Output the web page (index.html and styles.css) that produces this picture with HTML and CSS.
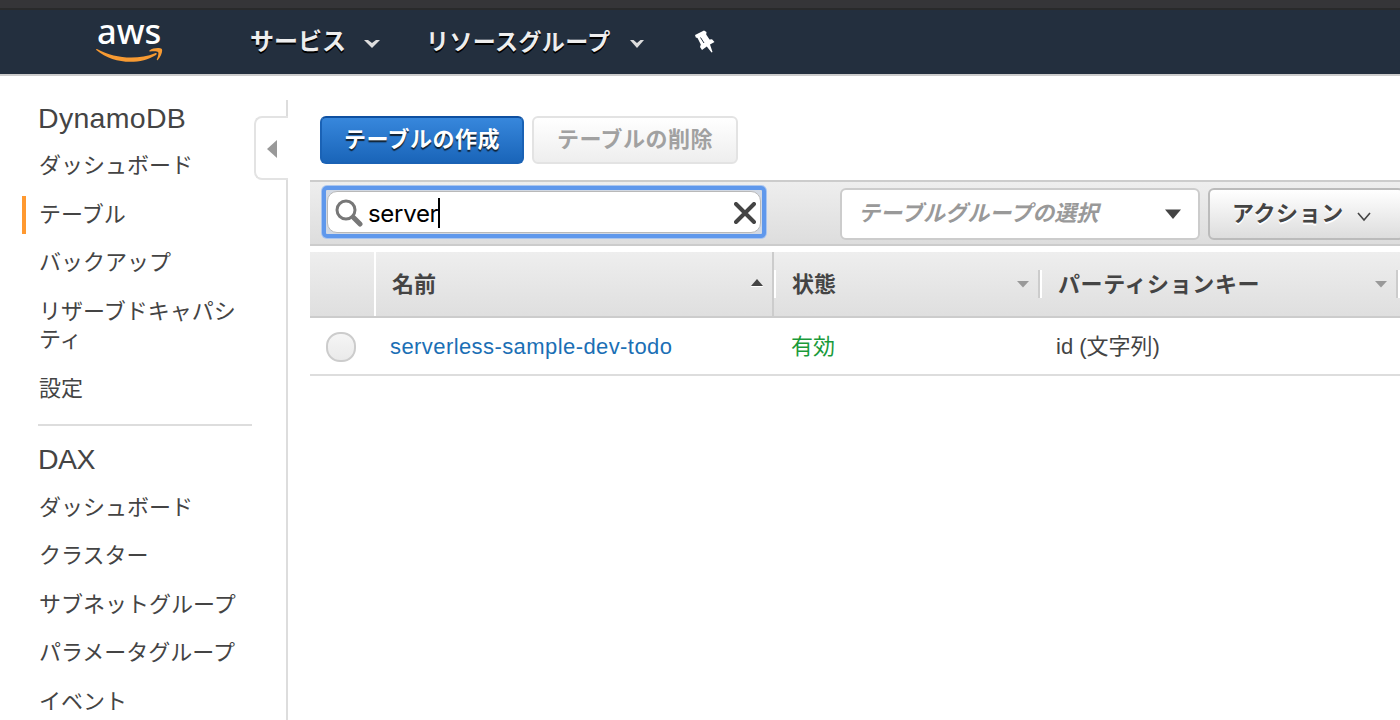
FILE: index.html
```html
<!DOCTYPE html>
<html lang="ja">
<head>
<meta charset="utf-8">
<title>DynamoDB</title>
<link rel="stylesheet" href="styles.css">
</head>
<body>
<div class="chrome-strip"></div>
<header class="navbar">
  <a class="logo"><span class="logo-text">aws</span>
    <svg class="logo-smile" width="68" height="15" viewBox="0 0 68 15"><path d="M1 1C19 11 42 12 59 5.200C60.800 4.600 61.500 6 60 7C43 17.500 17 16 .3 2C-.2 1.300 .3 .6 1 1Z" fill="#f79a32"/><path d="M53.500 2.500C57-.3 64-.5 65.800 1C67 3 65 9 61.800 12C61 12.500 60.500 12 60.900 11.200C62 8.500 62.800 5.500 62.200 4.300C61.200 3 57 3.300 54 3.600C53 3.600 52.900 3 53.500 2.500Z" fill="#f79a32"/></svg>
  </a>
  <a class="nav-item services">サービス</a>
  <svg class="nav-caret" width="16" height="10" viewBox="0 0 16 10"><path d="M0 1H4L8 4L12 1H16L8 9Z" fill="#ddd"/></svg>
  <a class="nav-item groups">リソースグループ</a>
  <svg class="nav-caret second" width="14" height="10" viewBox="0 0 14 10"><path d="M0 1H3.500L7 4L10.500 1H14L7 9Z" fill="#ddd"/></svg>
  <svg class="pin" width="20" height="23" viewBox="0 0 20 23"><path d="M0 5L9 .5L11.500 2L11.200 4.500L14.500 9.500L17 9.300L19.500 12L15 14.500L17.500 22L16.500 22.500L11.800 16.500L7 20L5 17L5.800 14.500L2.500 8L.8 7.500Z" fill="#fff"/><path d="M5.500 7.500L9 13" stroke="#232f3e" stroke-width="1"/></svg>
</header>
<div class="page">
  <nav class="sidebar">
    <h2>DynamoDB</h2>
    <ul>
      <li>ダッシュボード</li>
      <li class="active">テーブル</li>
      <li>バックアップ</li>
      <li>リザーブドキャパシティ</li>
      <li>設定</li>
    </ul>
    <hr>
    <h2 class="dax">DAX</h2>
    <ul class="dax-list">
      <li>ダッシュボード</li>
      <li>クラスター</li>
      <li>サブネットグループ</li>
      <li>パラメータグループ</li>
      <li>イベント</li>
    </ul>
  </nav>
  <div class="rail">
    <div class="rail-top"></div>
    <div class="collapse"><svg width="10" height="18" viewBox="0 0 10 18"><path d="M0 9L10 0V18Z" fill="#999"/></svg></div>
    <div class="rail-line"></div>
  </div>
  <main class="content">
    <div class="buttons">
      <button class="btn primary">テーブルの作成</button>
      <button class="btn disabled">テーブルの削除</button>
    </div>
    <div class="toolbar">
      <div class="search"><div class="search-inner">
        <svg width="28" height="28" viewBox="0 0 28 28"><path d="M18.500 18.500L25 25" stroke="#777" stroke-width="5" stroke-linecap="round"/><circle cx="11" cy="11" r="9" fill="none" stroke="#777" stroke-width="3"/></svg>
        <span class="query">server</span><span class="cursor"></span>
        <svg class="clear" width="22" height="22" viewBox="0 0 22 22"><path d="M2 2L20 20M20 2L2 20" stroke="#444" stroke-width="4" stroke-linecap="round"/></svg>
      </div></div>
      <div class="select"><span class="placeholder">テーブルグループの選択</span><svg width="16" height="10" viewBox="0 0 16 10"><path d="M0 .5H16L8 10Z" fill="#444"/></svg></div>
      <div class="actions"><span>アクション</span><svg width="14" height="10" viewBox="0 0 14 10"><path d="M1 1L7 8L13 1" fill="none" stroke="#444" stroke-width="1.600"/></svg></div>
    </div>
    <div class="grid head">
      <div class="cell check"></div>
      <div class="cell name"><span class="label">名前</span><svg width="12" height="8" viewBox="0 0 12 8"><path d="M0 7L6 0L12 7Z" fill="#444"/><path d="M0 7.500H12" stroke="#fff"/></svg></div>
      <div class="cell state"><i class="tick"></i><span class="label">状態</span><svg width="12" height="8" viewBox="0 0 12 8"><path d="M0 1H12L6 7.500Z" fill="#999"/></svg></div>
      <div class="cell key"><i class="tick grey"></i><span class="label">パーティションキー</span><svg width="12" height="8" viewBox="0 0 12 8"><path d="M0 1H12L6 7.500Z" fill="#999"/></svg></div>
      <div class="cell more"><i class="tick grey"></i></div>
    </div>
    <div class="grid row">
      <div class="cell check"><span class="radio"></span></div>
      <div class="cell name"><a class="link">serverless-sample-dev-todo</a></div>
      <div class="cell state ok">有効</div>
      <div class="cell key">id (文字列)</div>
    </div>
  </main>
</div>
</body>
</html>
```
FILE: styles.css
```css
* { box-sizing: border-box; }
body {
  margin: 0;
  height: 720px;
  overflow: hidden;
  background: #fff;
  color: #444;
  font: 22px/28.6px "Liberation Sans", "Noto Sans CJK JP", sans-serif;
}
svg { flex: none; display: block; }
.chrome-strip { height: 10px; background: #353538; border-bottom: 2px solid #292a2b; }
.navbar {
  display: flex;
  align-items: center;
  height: 66px;
  padding-left: 96px;
  background: #232f3e;
  border-bottom: 2px solid #ccc;
}
.logo { width: 154px; height: 64px; padding-top: 3px; }
.logo-text { display: block; height: 35px; padding-left: 1px; font: 500 34.500px/35px "Noto Sans", sans-serif; color: #fff; }
.nav-item {
  color: #eee;
  font-size: 24px;
  font-weight: bold;
  white-space: nowrap;
  text-shadow: 0 2px 0 #000;
}
.services { width: 114px; }
.nav-caret { margin-top: 4px; }
.groups { width: 204px; margin-left: 46px; font-size: 23px; letter-spacing: .4px; }
.pin { margin-left: 51px; margin-bottom: 2px; }
.page { display: flex; height: 644px; }
.sidebar { width: 254px; padding: 28px 2px 0 38px; flex: none; }
h2 { margin: 0; font-size: 28.500px; font-weight: normal; line-height: 28px; letter-spacing: .3px; }
h2.dax { letter-spacing: -.5px; }
ul { list-style: none; margin: 10px 0 0; padding: 0; }
.dax-list { margin-top: 11px; }
li { margin-left: -16px; padding: 10px 0 10px 17px; line-height: 28.600px; word-break: break-all; }
.active { background: linear-gradient(#ff9930, #ff9930) 0 5px / 4px 38px no-repeat; }
hr { height: 2px; margin: 10px 0 19px; border: 0; background: #ddd; }
.rail { width: 34px; flex: none; display: flex; flex-direction: column; padding-top: 24px; }
.rail-top { height: 16px; border-right: 2px solid #ddd; }
.rail-line { flex: 1; border-right: 2px solid #ddd; }
.collapse {
  height: 64px;
  display: flex;
  align-items: center;
  padding: 2px 0 0 11px;
  border: 2px solid #e3e3e3;
  border-right: 0;
  border-radius: 8px 0 0 8px;
}
.content { flex: none; width: 1090px; margin-left: 22px; padding-top: 40px; }
.buttons { display: flex; gap: 8px; padding-left: 10px; }
.btn { height: 48px; padding: 0; border-radius: 6px; font: bold 22px/28px "Liberation Sans", "Noto Sans CJK JP", sans-serif; letter-spacing: .5px; }
.primary { width: 204px; border: 2px solid #1a62b5; border-top-color: #0f50a0; background: linear-gradient(#3787dc, #1a65b9); color: #fff; text-shadow: 0 2px 1px #123; }
.disabled { width: 206px; border: 2px solid #e3e3e3; background: linear-gradient(#fff, #eee); color: #a1a1a1; }
.toolbar {
  display: flex;
  align-items: center;
  height: 66px;
  margin-top: 16px;
  padding: 2px 0 0 12px;
  background: linear-gradient(#eee, #ddd);
  border: solid #ccc;
  border-width: 2px 0;
}
.search { width: 444px; height: 52px; margin-top: -4px; padding: 1px; background: #d2d9e4; border: 4px solid #5f98ec; border-radius: 5px; box-shadow: 0 0 0 1px #a9c5ef; flex: none; }
.search-inner { height: 42px; display: flex; align-items: center; padding: 2px 4px 0 7px; border: 1px solid #b9b9b9; border-radius: 10px; background: #fff; }
.query { margin-left: 5px; padding-top: 1px; color: #000; font: 24px/28px "Inter", sans-serif; letter-spacing: -.3px; }
.cursor { width: 2px; height: 30px; background: #000; }
.clear { margin-left: auto; }
.select { width: 360px; height: 52px; flex: none; display: flex; align-items: center; justify-content: space-between; margin-left: 74px; padding: 0 17px 0 16px; background: #fff; border: 2px solid #ccc; border-radius: 6px; }
.placeholder { color: #999; font-weight: bold; font-style: italic; letter-spacing: .1px; }
.actions { width: 196px; height: 52px; flex: none; display: flex; align-items: center; margin-left: 8px; padding-left: 22px; gap: 13px; border: 2px solid #bbb; border-radius: 6px; background: linear-gradient(#fff, #ddd); font-weight: bold; letter-spacing: .6px; text-shadow: 0 2px 0 #fff; }
.actions svg { margin-top: 5px; }
.grid { display: grid; grid-template-columns: 66px 398px 265px 358px 3px; }
.head { height: 66px; margin-top: 6px; background: linear-gradient(#eee, #dfdfdf); border-bottom: 2px solid #ccc; font-weight: bold; }
.cell { display: flex; align-items: center; white-space: nowrap; }
.label { padding-top: 2px; }
.head .cell svg { margin-left: auto; margin-right: 10px; }
.head .cell.name svg { margin-right: 9px; margin-bottom: 2px; }
.head .check { border-right: 2px solid #fff; }
.head .name { padding-left: 16px; border-right: 2px solid #ccc; }
.tick { width: 2px; height: 28px; flex: none; background: #fff; }
.head .state .tick { margin-right: 16px; }
.head .key { letter-spacing: .6px; }
.head .key .tick { margin-right: 16px; }
.head .tick.grey { width: 4px; margin-left: -1px; background: linear-gradient(90deg, #ccc 50%, #fff 50%); }
.row { height: 58px; padding-top: 2px; border-bottom: 2px solid #ddd; }
.row .check { padding-left: 16px; }
.row .name { padding-left: 14px; }
.row .state { padding-left: 17px; }
.row .key { padding-left: 17px; }
.radio { width: 30px; height: 30px; border: 2px solid #ccc; border-radius: 14px; background: linear-gradient(#f5f5f5, #eaeaea); }
.link { color: #1b6fb5; letter-spacing: .42px; }
.ok { color: #1a9a3a; }
```
